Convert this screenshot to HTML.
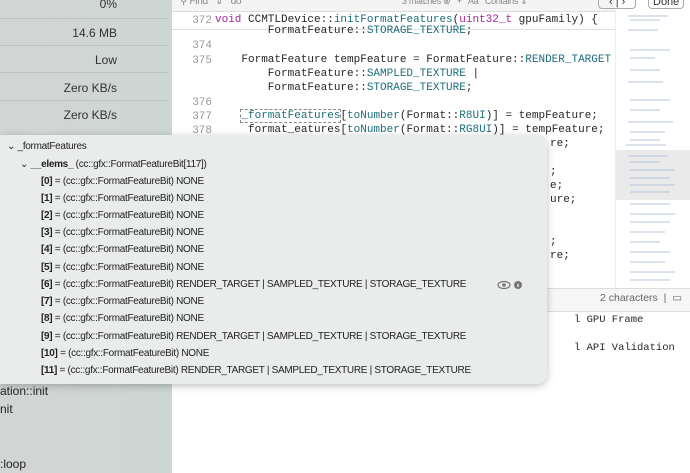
<html><head><style>
body{margin:0;width:690px;height:473px;overflow:hidden;position:relative;font-family:"Liberation Sans",sans-serif;background:#fff}
.side{position:absolute;left:0;top:0;width:172px;height:473px;background:linear-gradient(90deg,#d3d5d4,#cdd6d3)}
.sv{position:absolute;right:55px;font-size:12px;color:#333}
.sep{position:absolute;left:0;width:168px;height:1px;background:#bfc2c1}
.code{position:absolute;left:172px;top:0;width:443px;height:473px;background:#fff;overflow:hidden}
.ln{position:absolute;left:16px;width:24px;text-align:right;font:11px "Liberation Mono",monospace;color:#999}
.cl{position:absolute;left:43px;font-family:"Liberation Mono",monospace;font-size:11px;color:#262626;white-space:pre}
.t{color:#1d6d7a}.k{color:#a5249c}
.pop{position:absolute;left:0;top:135px;width:547px;height:249px;background:#e9ecea;border-radius:0 10px 10px 0;box-shadow:0 2px 8px rgba(0,0,0,.25)}
.r{position:absolute;font-size:10px;letter-spacing:-0.3px;color:#222;white-space:pre}
.r b{font-weight:bold}
.mm{position:absolute;left:615px;top:10px;width:75px;height:278px;background:#fff;border-left:1px solid #eee}
</style></head><body>
<div class="side">
<div class="sv" style="top:-3px">0%</div><div class="sep" style="top:18px"></div>
<div class="sv" style="top:26px">14.6 MB</div><div class="sep" style="top:45px"></div>
<div class="sv" style="top:53px">Low</div><div class="sep" style="top:72px"></div>
<div class="sv" style="top:81px">Zero KB/s</div><div class="sep" style="top:100px"></div>
<div class="sv" style="top:108px">Zero KB/s</div>
<div class="r" style="left:0;top:384px;font-size:12px;letter-spacing:0">ation::init</div>
<div class="r" style="left:0;top:402px;font-size:12px;letter-spacing:0">nit</div>
<div class="r" style="left:0;top:457px;font-size:12px;letter-spacing:0">:loop</div>
</div>
<div class="code">
<div style="position:absolute;left:0;top:0;width:443px;height:11px;background:#f4f4f4;border-bottom:1px solid #ddd"></div>
<div class="r" style="left:8px;top:-4px;color:#888">⚲ Find &nbsp; ⇕ &nbsp; do</div>
<div class="r" style="left:230px;top:-4px;font-size:9px;color:#888">3 matches ⊗ &nbsp; + &nbsp; Aa &nbsp; Contains ⇕</div>
<div class="ln" style="top:15px">372</div><div class="cl" style="top:14px"><span class="k">void</span> CCMTLDevice::<span class="t">initFormatFeatures</span>(<span class="k">uint32_t</span> gpuFamily) {</div>
<div style="position:absolute;left:0;top:29px;width:443px;height:1px;background:#ddd"></div>
<div class="cl" style="top:25px">        FormatFeature::<span class="t">STORAGE_TEXTURE</span>;</div>
<div class="ln" style="top:40px">374</div>
<div class="ln" style="top:55px">375</div><div class="cl" style="top:54px">    FormatFeature tempFeature = FormatFeature::<span class="t">RENDER_TARGET</span> |</div>
<div class="cl" style="top:68px">        FormatFeature::<span class="t">SAMPLED_TEXTURE</span> |</div>
<div class="cl" style="top:82px">        FormatFeature::<span class="t">STORAGE_TEXTURE</span>;</div>
<div class="ln" style="top:97px">376</div>
<div class="ln" style="top:111px">377</div><div class="cl" style="top:110px">    <span style="outline:1px dashed #888"><span class="t">_formatFeatures</span></span>[<span class="t">toNumber</span>(Format::<span class="t">R8UI</span>)] = tempFeature;</div>
<div class="ln" style="top:125px">378</div><div class="cl" style="top:124px">     format_eatures[<span class="t">toNumber</span>(Format::<span class="t">RG8UI</span>)] = tempFeature;</div>
<div class="cl" style="top:138px;left:378px">re;</div>
<div class="cl" style="top:166px;left:378px">;</div>
<div class="cl" style="top:180px;left:378px">e;</div>
<div class="cl" style="top:194px;left:378px">ure;</div>
<div class="cl" style="top:236px;left:378px">;</div>
<div class="cl" style="top:250px;left:378px">re;</div>
</div>
<div class="cl" style="top:314px;left:574px;font-size:10.5px">l GPU Frame</div>
<div class="cl" style="top:342px;left:574px;font-size:10.5px">l API Validation</div>
<div class="mm">
<div style="position:absolute;left:0;top:140px;width:75px;height:50px;background:#eaeaea"></div>
<svg width="75" height="278" style="position:absolute;left:0;top:0" stroke="#b8c4d8" stroke-width="1">
<path d="M12 6h40M14 10h30M12 20h30M14 40h40M14 48h25M14 60h30M12 72h35M14 90h40M14 100h30M12 112h45M14 122h35M14 130h30M10 135h40M12 146h40M14 152h30M14 160h45M14 168h40M14 175h45M14 182h40M14 194h40M14 204h45M14 212h40M14 222h35M14 232h30M14 242h40M14 252h35M14 262h45M14 270h40"/></svg>
</div>
<div style="position:absolute;left:172px;top:288px;width:518px;height:22px;background:#f6f6f6;border-top:1px solid #ddd;border-bottom:1px solid #ddd"></div>
<div class="r" style="left:600px;top:292px;color:#666;font-size:10.5px;letter-spacing:0">2 characters &nbsp;| &nbsp;▭</div>
<div style="position:absolute;left:598px;top:0;width:92px;height:10px;font-size:11px;color:#333"><span style="position:absolute;left:0;top:-4px;border:1px solid #aaa;border-top:none;padding:0 10px;border-radius:0 0 4px 4px">‹ | ›</span><span style="position:absolute;left:50px;top:-4px;border:1px solid #aaa;border-top:none;padding:0 4px;border-radius:0 0 4px 4px">Done</span></div>
<div class="pop">
<div class="r" style="left:7px;top:6px">⌄ _formatFeatures</div>
<div class="r" style="left:20px;top:24px">⌄ <b>__elems_</b> (cc::gfx::FormatFeatureBit[117])</div>
<div class="r" style="left:41px;top:41px"><b>[0]</b> = (cc::gfx::FormatFeatureBit) NONE</div>
<div class="r" style="left:41px;top:58px"><b>[1]</b> = (cc::gfx::FormatFeatureBit) NONE</div>
<div class="r" style="left:41px;top:75px"><b>[2]</b> = (cc::gfx::FormatFeatureBit) NONE</div>
<div class="r" style="left:41px;top:92px"><b>[3]</b> = (cc::gfx::FormatFeatureBit) NONE</div>
<div class="r" style="left:41px;top:109px"><b>[4]</b> = (cc::gfx::FormatFeatureBit) NONE</div>
<div class="r" style="left:41px;top:127px"><b>[5]</b> = (cc::gfx::FormatFeatureBit) NONE</div>
<div class="r" style="left:41px;top:144px"><b>[6]</b> = (cc::gfx::FormatFeatureBit) RENDER_TARGET | SAMPLED_TEXTURE | STORAGE_TEXTURE</div>
<svg style="position:absolute;left:497px;top:144px" width="26" height="12"><ellipse cx="7" cy="6" rx="6" ry="3.5" fill="none" stroke="#777" stroke-width="1.2"/><circle cx="7" cy="6" r="1.8" fill="#777"/><circle cx="21" cy="6" r="4" fill="#777"/><rect x="20.4" y="5" width="1.2" height="3" fill="#fff"/></svg>
<div class="r" style="left:41px;top:161px"><b>[7]</b> = (cc::gfx::FormatFeatureBit) NONE</div>
<div class="r" style="left:41px;top:178px"><b>[8]</b> = (cc::gfx::FormatFeatureBit) NONE</div>
<div class="r" style="left:41px;top:196px"><b>[9]</b> = (cc::gfx::FormatFeatureBit) RENDER_TARGET | SAMPLED_TEXTURE | STORAGE_TEXTURE</div>
<div class="r" style="left:41px;top:213px"><b>[10]</b> = (cc::gfx::FormatFeatureBit) NONE</div>
<div class="r" style="left:41px;top:230px"><b>[11]</b> = (cc::gfx::FormatFeatureBit) RENDER_TARGET | SAMPLED_TEXTURE | STORAGE_TEXTURE</div>
</div>
</body></html>
